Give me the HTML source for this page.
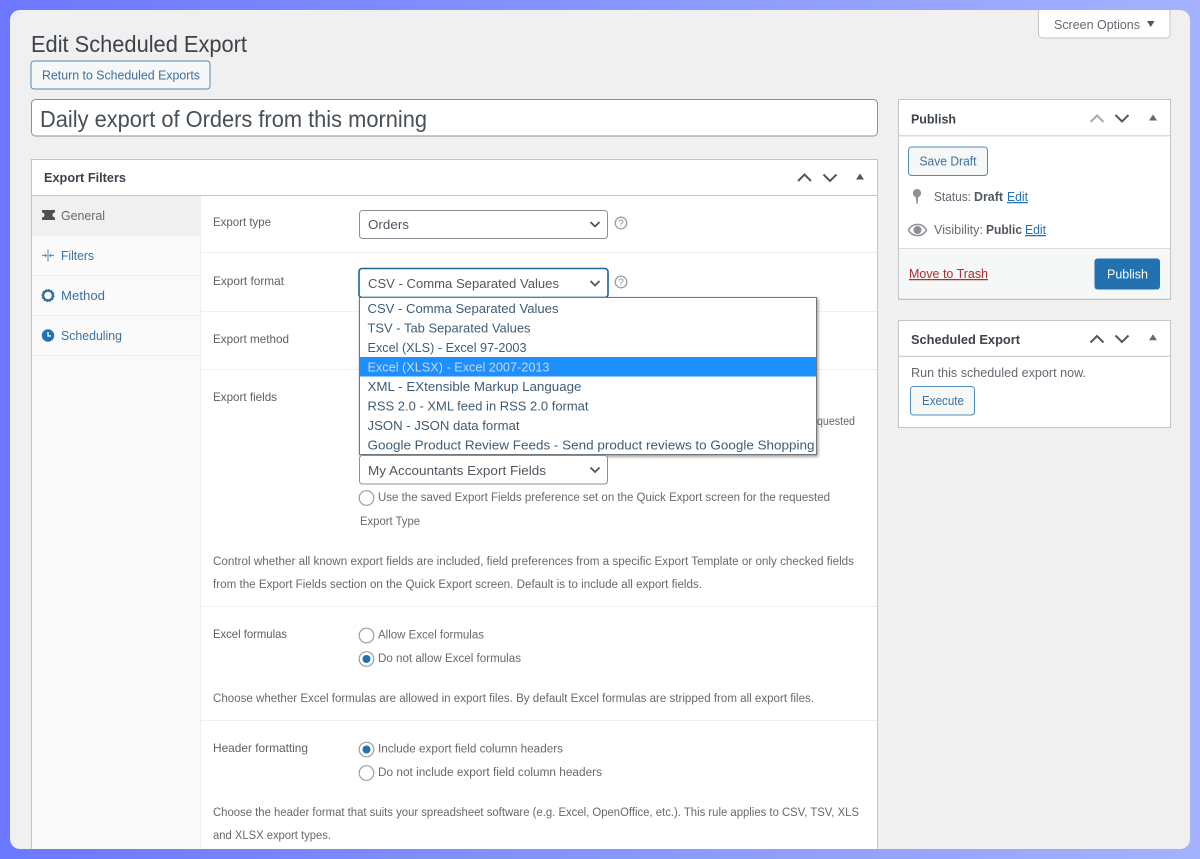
<!DOCTYPE html>
<html lang="en">
<head>
<meta charset="utf-8">
<title>Edit Scheduled Export</title>
<style>
html,body{margin:0;padding:0;width:1200px;height:859px;overflow:hidden;background:#8490ff}
svg{display:block;filter:blur(.35px)}
text{font-family:"Liberation Sans",sans-serif;font-size:12.5px;fill:#50575e}
.lb{fill:#5a6167;font-size:12px}
.sm{fill:#646a70;font-size:11.5px}
.bl{fill:#3d719c}
.op{fill:#3f5c73;font-size:13px}
.sel{fill:#50575e;font-size:13px}
.b{font-weight:bold;fill:#3c434a}
a text,.lk{fill:#2271b1;text-decoration:underline}
.chev{fill:none;stroke:#50575e;stroke-width:2}
</style>
</head>
<body>
<svg width="1200" height="859" viewBox="0 0 1200 859" xmlns="http://www.w3.org/2000/svg">
<defs>
<linearGradient id="bg" x1="0" y1="0" x2="1" y2="0"><stop offset="0" stop-color="#6c78ff"/><stop offset="1" stop-color="#a4b2ff"/></linearGradient>
<filter id="sh" x="-5%" y="-10%" width="110%" height="120%"><feDropShadow dx="1" dy="1.5" stdDeviation="1.5" flood-color="#000" flood-opacity=".45"/></filter>
<clipPath id="panel"><rect x="10" y="10" width="1180" height="839" rx="10"/></clipPath>
</defs>
<rect width="1200" height="859" fill="url(#bg)"/>
<rect x="10" y="10" width="1180" height="839" rx="10" fill="#f0f0f1"/>
<g clip-path="url(#panel)">

<!-- Screen options -->
<path d="M1038.5 5V34a4 4 0 0 0 4 4H1166a4 4 0 0 0 4-4V5Z" fill="#fff" stroke="#c3c4c7"/>
<text x="1054" y="29" textLength="86" lengthAdjust="spacingAndGlyphs" style="fill:#646970">Screen Options</text>
<path d="M1147 21h7.500l-3.750 6Z" fill="#50575e"/>

<!-- Heading -->
<text x="31" y="52" textLength="216" lengthAdjust="spacingAndGlyphs" style="font-size:23px;fill:#3c434a">Edit Scheduled Export</text>
<rect x="31" y="61" width="179" height="28" rx="3" fill="#f6f7f7" stroke="#4f8dbd"/>
<text x="42" y="79.500" textLength="158" lengthAdjust="spacingAndGlyphs" class="bl">Return to Scheduled Exports</text>

<rect x="31.500" y="99.500" width="846" height="36.500" rx="4" fill="#fff" stroke="#8c8f94"/>
<text x="40" y="127" textLength="387" lengthAdjust="spacingAndGlyphs" style="font-size:23px;fill:#484f55">Daily export of Orders from this morning</text>

<!-- Export Filters box -->
<rect x="31.500" y="159.500" width="846" height="720" fill="#fff" stroke="#c3c4c7"/>
<line x1="32" x2="877" y1="195.500" y2="195.500" stroke="#c3c4c7"/>
<text x="44" y="182" textLength="82" lengthAdjust="spacingAndGlyphs" class="b" style="font-size:12.500px">Export Filters</text>
<path class="chev" d="M798 181l6.500-6.500 6.500 6.500"/>
<path class="chev" d="M823.500 174.500l6.500 6.500 6.500-6.500"/>
<path d="M856 179.500h8l-4-6Z" fill="#50575e"/>

<!-- Sidebar -->
<rect x="32" y="196" width="169" height="660" fill="#fafafa"/>
<rect x="32" y="196" width="169" height="40" fill="#f0f0f1"/>
<line x1="32" x2="201" y1="275.500" y2="275.500" stroke="#efefef"/>
<line x1="32" x2="201" y1="315.500" y2="315.500" stroke="#efefef"/>
<line x1="32" x2="201" y1="355.500" y2="355.500" stroke="#efefef"/>
<line x1="200.500" x2="200.500" y1="196" y2="856" stroke="#f0f0f1"/>
<path d="M42 210h13v2.500a2.500 2.500 0 0 0 0 5V220H42v-2.500a2.500 2.500 0 0 0 0-5Z" fill="#50504f"/>
<text x="61" y="220" textLength="44" lengthAdjust="spacingAndGlyphs" style="fill:#646970">General</text>
<path d="M48 249.500v12M42 255.500h4M50 255.500h4M45 254l1.500 1.500L45 257M51 254l-1.500 1.500L51 257" fill="none" stroke="#5b8bb5" stroke-width="1"/>
<text x="61" y="260" textLength="33" lengthAdjust="spacingAndGlyphs" class="bl">Filters</text>
<circle cx="48" cy="295.500" r="4.800" fill="none" stroke="#2f6c9c" stroke-width="2"/>
<circle cx="48" cy="295.500" r="6" fill="none" stroke="#2f6c9c" stroke-width="1" stroke-dasharray="2 1.100"/>
<text x="61" y="300" textLength="44" lengthAdjust="spacingAndGlyphs" class="bl">Method</text>
<circle cx="48" cy="335.500" r="6.200" fill="#2271b1"/>
<path d="M48 332v4h3" fill="none" stroke="#fff" stroke-width="1.300"/>
<text x="61" y="340" textLength="61" lengthAdjust="spacingAndGlyphs" class="bl">Scheduling</text>

<!-- Section dividers -->
<g stroke="#f0f0f1">
<line x1="201" x2="877" y1="252.500" y2="252.500"/>
<line x1="201" x2="877" y1="311.500" y2="311.500"/>
<line x1="201" x2="877" y1="369.500" y2="369.500"/>
<line x1="201" x2="877" y1="606.500" y2="606.500"/>
<line x1="201" x2="877" y1="720.500" y2="720.500"/>
</g>

<!-- Labels -->
<text class="lb" x="213" y="226" textLength="58" lengthAdjust="spacingAndGlyphs">Export type</text>
<text class="lb" x="213" y="285" textLength="71" lengthAdjust="spacingAndGlyphs">Export format</text>
<text class="lb" x="213" y="343" textLength="76" lengthAdjust="spacingAndGlyphs">Export method</text>
<text class="lb" x="213" y="401" textLength="64" lengthAdjust="spacingAndGlyphs">Export fields</text>
<text class="lb" x="213" y="638" textLength="74" lengthAdjust="spacingAndGlyphs">Excel formulas</text>
<text class="lb" x="213" y="752" textLength="95" lengthAdjust="spacingAndGlyphs">Header formatting</text>

<!-- Export type select -->
<rect x="359.500" y="210.500" width="248" height="28" rx="3" fill="#fff" stroke="#8c8f94"/>
<text class="sel" x="368" y="229" textLength="41" lengthAdjust="spacingAndGlyphs">Orders</text>
<path d="M590.500 222l4.500 4.500 4.500-4.500" fill="none" stroke="#50575e" stroke-width="1.800"/>
<circle cx="621" cy="223" r="5.800" fill="none" stroke="#9a9ea2" stroke-width="1.300"/>
<text x="618.300" y="226.700" style="font-size:10px;fill:#8c8f94">?</text>

<!-- Export format select -->
<rect x="359" y="268.500" width="249" height="29" rx="3" fill="#fff" stroke="#1c6394" stroke-width="1.600"/>
<text class="sel" x="368" y="288" textLength="191" lengthAdjust="spacingAndGlyphs">CSV - Comma Separated Values</text>
<path d="M590.500 281l4.500 4.500 4.500-4.500" fill="none" stroke="#50575e" stroke-width="1.800"/>
<circle cx="621" cy="282" r="5.800" fill="none" stroke="#9a9ea2" stroke-width="1.300"/>
<text x="618.300" y="285.700" style="font-size:10px;fill:#8c8f94">?</text>

<!-- Text peeking out from behind dropdown -->
<text class="sm" x="817" y="425" textLength="38" lengthAdjust="spacingAndGlyphs">quested</text>

<!-- Dropdown -->
<rect x="359.500" y="297.500" width="457" height="157" fill="#fff" stroke="#767676" filter="url(#sh)"/>
<rect x="360" y="357" width="456" height="19.500" fill="#1e8fff"/>
<text class="op" x="367.500" y="313" textLength="191" lengthAdjust="spacingAndGlyphs">CSV - Comma Separated Values</text>
<text class="op" x="367.500" y="332.500" textLength="163" lengthAdjust="spacingAndGlyphs">TSV - Tab Separated Values</text>
<text class="op" x="367.500" y="352" textLength="159" lengthAdjust="spacingAndGlyphs">Excel (XLS) - Excel 97-2003</text>
<text class="op" x="367.500" y="371.500" textLength="182" lengthAdjust="spacingAndGlyphs" style="fill:#c4d8ec">Excel (XLSX) - Excel 2007-2013</text>
<text class="op" x="367.500" y="391" textLength="214" lengthAdjust="spacingAndGlyphs">XML - EXtensible Markup Language</text>
<text class="op" x="367.500" y="410.500" textLength="221" lengthAdjust="spacingAndGlyphs">RSS 2.0 - XML feed in RSS 2.0 format</text>
<text class="op" x="367.500" y="430" textLength="152" lengthAdjust="spacingAndGlyphs">JSON - JSON data format</text>
<text class="op" x="367.500" y="449.500" textLength="447" lengthAdjust="spacingAndGlyphs">Google Product Review Feeds - Send product reviews to Google Shopping</text>

<!-- Export fields -->
<rect x="359.500" y="455.500" width="248" height="28.500" rx="3" fill="#fff" stroke="#8c8f94"/>
<text class="sel" x="368" y="475" textLength="178" lengthAdjust="spacingAndGlyphs">My Accountants Export Fields</text>
<path d="M590.500 467.500l4.500 4.500 4.500-4.500" fill="none" stroke="#50575e" stroke-width="1.800"/>
<circle cx="366.500" cy="498" r="7.300" fill="#fff" stroke="#9a9ea2" stroke-width="1.200"/>
<text class="sm" x="378" y="501" textLength="452" lengthAdjust="spacingAndGlyphs">Use the saved Export Fields preference set on the Quick Export screen for the requested</text>
<text class="sm" x="360" y="525" textLength="60" lengthAdjust="spacingAndGlyphs">Export Type</text>
<text class="sm" x="213" y="565" textLength="641" lengthAdjust="spacingAndGlyphs">Control whether all known export fields are included, field preferences from a specific Export Template or only checked fields</text>
<text class="sm" x="213" y="588" textLength="489" lengthAdjust="spacingAndGlyphs">from the Export Fields section on the Quick Export screen. Default is to include all export fields.</text>

<!-- Excel formulas -->
<circle cx="366.500" cy="635.500" r="7.300" fill="#fff" stroke="#9a9ea2" stroke-width="1.200"/>
<text class="sm" x="378" y="638.500" textLength="106" lengthAdjust="spacingAndGlyphs">Allow Excel formulas</text>
<circle cx="366.500" cy="659" r="7.300" fill="#fff" stroke="#9a9ea2" stroke-width="1.200"/>
<circle cx="366.500" cy="659" r="4" fill="#2271b1"/>
<text class="sm" x="378" y="662" textLength="143" lengthAdjust="spacingAndGlyphs">Do not allow Excel formulas</text>
<text class="sm" x="213" y="702" textLength="601" lengthAdjust="spacingAndGlyphs">Choose whether Excel formulas are allowed in export files. By default Excel formulas are stripped from all export files.</text>

<!-- Header formatting -->
<circle cx="366.500" cy="749.500" r="7.300" fill="#fff" stroke="#9a9ea2" stroke-width="1.200"/>
<circle cx="366.500" cy="749.500" r="4" fill="#2271b1"/>
<text class="sm" x="378" y="752.500" textLength="185" lengthAdjust="spacingAndGlyphs">Include export field column headers</text>
<circle cx="366.500" cy="773" r="7.300" fill="#fff" stroke="#9a9ea2" stroke-width="1.200"/>
<text class="sm" x="378" y="776" textLength="224" lengthAdjust="spacingAndGlyphs">Do not include export field column headers</text>
<text class="sm" x="213" y="816" textLength="646" lengthAdjust="spacingAndGlyphs">Choose the header format that suits your spreadsheet software (e.g. Excel, OpenOffice, etc.). This rule applies to CSV, TSV, XLS</text>
<text class="sm" x="213" y="839" textLength="118" lengthAdjust="spacingAndGlyphs">and XLSX export types.</text>

<!-- Publish box -->
<rect x="898.500" y="99.500" width="272" height="200" fill="#fff" stroke="#c3c4c7"/>
<line x1="899" x2="1170" y1="135.800" y2="135.800" stroke="#dcdcde" stroke-width="1.500"/>
<text x="911" y="123.500" textLength="45" lengthAdjust="spacingAndGlyphs" class="b">Publish</text>
<path d="M1090.500 122l6.500-6.500 6.500 6.500" fill="none" stroke="#a7aaad" stroke-width="2"/>
<path class="chev" d="M1115.500 115l6.500 6.500 6.500-6.500"/>
<path d="M1149 120.500h8l-4-6Z" fill="#646970"/>
<rect x="908.500" y="147" width="79" height="28.500" rx="3" fill="#f6f7f7" stroke="#4f8dbd"/>
<text x="919.500" y="165.500" textLength="57" lengthAdjust="spacingAndGlyphs" class="bl">Save Draft</text>

<path d="M917 189a4.200 4.200 0 0 1 1.200 8.200L917.500 204h-1l-.7-6.800A4.200 4.200 0 0 1 917 189Z" fill="#8c8f94"/>
<text x="934" y="201" textLength="37" lengthAdjust="spacingAndGlyphs" style="fill:#646970">Status:</text>
<text x="974" y="201" textLength="29" lengthAdjust="spacingAndGlyphs" style="font-weight:bold;fill:#50575e">Draft</text>
<a><text x="1007" y="201" textLength="21" lengthAdjust="spacingAndGlyphs">Edit</text></a>

<path d="M908.500 230c4-7.500 14-7.500 18 0-4 7.500-14 7.500-18 0Z" fill="none" stroke="#8c8f94" stroke-width="1.500"/>
<circle cx="917.500" cy="230" r="4" fill="#8c8f94"/>
<text x="934" y="234" textLength="49" lengthAdjust="spacingAndGlyphs" style="fill:#646970">Visibility:</text>
<text x="986" y="234" textLength="36" lengthAdjust="spacingAndGlyphs" style="font-weight:bold;fill:#50575e">Public</text>
<a><text x="1025" y="234" textLength="21" lengthAdjust="spacingAndGlyphs">Edit</text></a>

<rect x="899" y="248" width="271" height="51" fill="#f6f7f7"/>
<line x1="899" x2="1170" y1="248.500" y2="248.500" stroke="#dcdcde"/>
<line x1="898.500" x2="1170.500" y1="299.300" y2="299.300" stroke="#c3c4c7" stroke-width="1.300"/>
<text x="909" y="278" textLength="79" lengthAdjust="spacingAndGlyphs" style="fill:#b32d2e;text-decoration:underline">Move to Trash</text>
<rect x="1094.500" y="258.500" width="65.500" height="31" rx="3" fill="#2271b1"/>
<text x="1107" y="278.500" textLength="41" lengthAdjust="spacingAndGlyphs" style="fill:#fff">Publish</text>

<!-- Scheduled Export box -->
<rect x="898.500" y="320.500" width="272" height="107" fill="#fff" stroke="#c3c4c7"/>
<line x1="899" x2="1170" y1="356.300" y2="356.300" stroke="#c3c4c7"/>
<text x="911" y="344" textLength="109" lengthAdjust="spacingAndGlyphs" class="b">Scheduled Export</text>
<path class="chev" d="M1090.500 342.500l6.500-6.500 6.500 6.500"/>
<path class="chev" d="M1115.500 335.500l6.500 6.500 6.500-6.500"/>
<path d="M1149 340.300h8l-4-6Z" fill="#646970"/>
<text x="911" y="377" textLength="175" lengthAdjust="spacingAndGlyphs" style="fill:#646970">Run this scheduled export now.</text>
<rect x="910.500" y="386.500" width="64" height="28.500" rx="3" fill="#f6f7f7" stroke="#4f8dbd"/>
<text x="922" y="405" textLength="42" lengthAdjust="spacingAndGlyphs" class="bl">Execute</text>
</g>
</svg>
</body>
</html>
